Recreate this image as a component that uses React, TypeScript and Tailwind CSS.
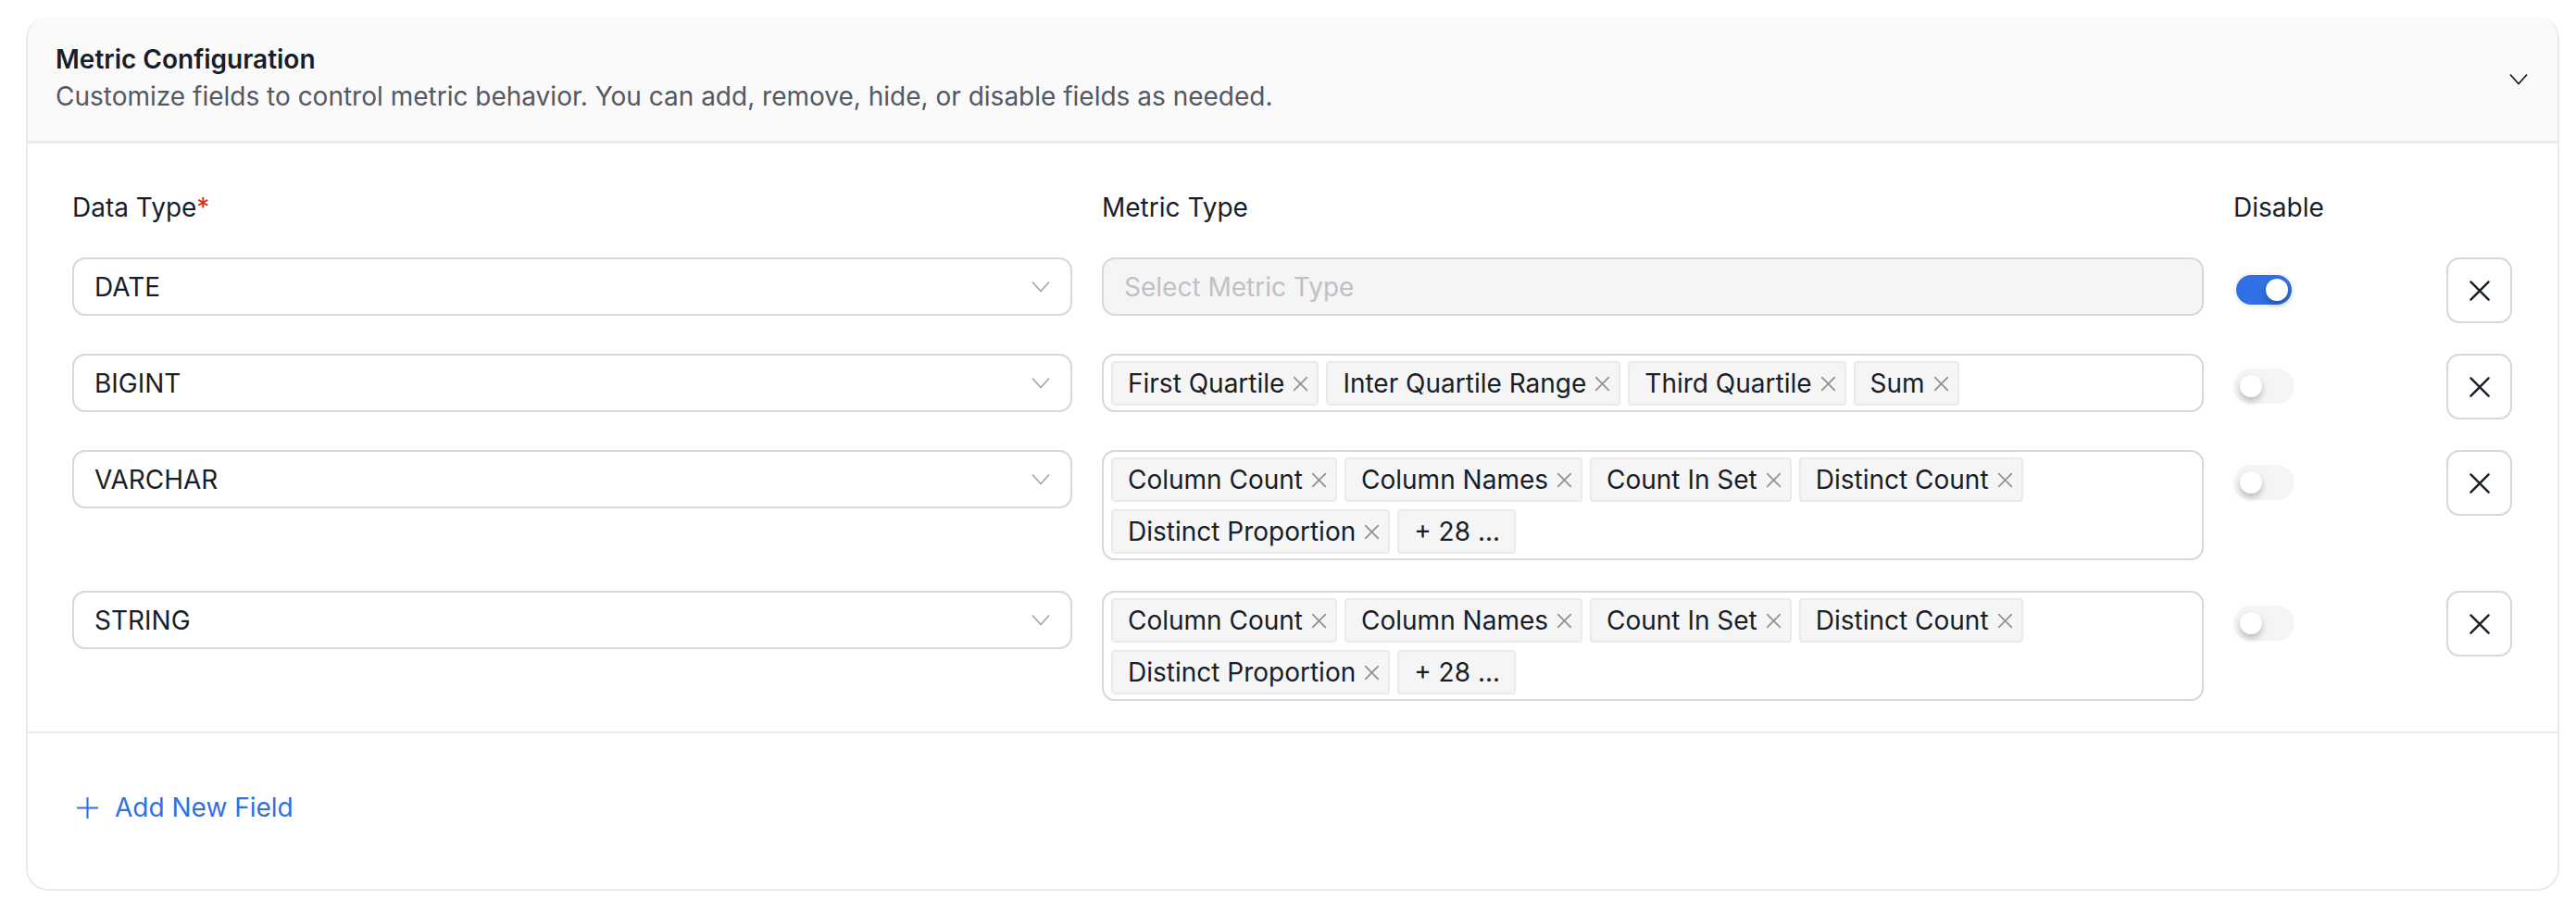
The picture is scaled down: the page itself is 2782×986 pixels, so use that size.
import React from 'react';

const font = { fontFamily: 'Inter, "Noto Sans", sans-serif' };

const Chevron = ({ className }: { className: string }) => (
  <svg viewBox="0 0 20 13" fill="none" stroke="currentColor" strokeWidth="1.8" className={className}>
    <path d="M1 1.5 10 11.5 19 1.5" />
  </svg>
);

const Cross = ({ className }: { className: string }) => (
  <svg viewBox="0 0 20 20" fill="none" stroke="currentColor" strokeWidth="2" strokeLinecap="round" className={className}>
    <path d="M2 2 18 18M18 2 2 18" />
  </svg>
);

const Tag = ({ label, close = true }: { label: string; close?: boolean }) => (
  <span className={`flex h-[48px] items-center gap-[9px] rounded-[4px] border-2 border-[#e9eaeb] bg-[#f5f5f5] pl-[16px] ${close ? 'pr-[9px]' : 'pr-[15px]'} text-[28px] text-[#181d27]`}>
    {label}
    {close && <Cross className="h-[17px] w-[17px] text-[#8f9196]" />}
  </span>
);

const SelectBox = ({ value }: { value: string }) => (
  <div className="flex h-[63px] items-center justify-between rounded-[14px] border-2 border-[#d5d7da] bg-white pl-[22px] pr-[22px] text-[28px] text-[#181d27]">
    {value}
    <Chevron className="h-[13px] w-[20px] text-[#a4a7ae]" />
  </div>
);

const Toggle = ({ on }: { on?: boolean }) => (
  <div className={`mt-[16px] flex h-[38px] w-[66px] items-center rounded-full border-[3px] border-[#f5f5f5] ${on ? 'justify-end bg-[#316fe4]' : 'bg-[#f5f5f5]'} px-[4px]`}>
    <div className="h-[24px] w-[24px] rounded-full bg-white shadow-[0_4px_7px_rgba(0,0,0,0.25)]" />
  </div>
);

const RemoveButton = () => (
  <button className="flex h-[71px] w-[71px] items-center justify-center rounded-[14px] border-2 border-[#d5d7da] bg-white text-[#181d27]">
    <Cross className="h-[24px] w-[24px]" />
  </button>
);

const longTags = ['Column Count', 'Column Names', 'Count In Set', 'Distinct Count', 'Distinct Proportion'];

const rows = [
  { type: 'DATE', on: true, tags: [] as string[], more: false },
  { type: 'BIGINT', on: false, tags: ['First Quartile', 'Inter Quartile Range', 'Third Quartile', 'Sum'], more: false },
  { type: 'VARCHAR', on: false, tags: longTags, more: true },
  { type: 'STRING', on: false, tags: longTags, more: true },
];

const App = () => {
  return (
    <div className="min-h-[986px] bg-white pl-[28px] pr-[18px] pt-[18px]" style={font}>
      <div className="overflow-hidden rounded-[24px] border-2 border-t-0 border-[#e9eaeb]">
        <div className="flex h-[137px] items-center justify-between border-b-[3px] border-[#e9eaeb] bg-[#fafafa] pl-[30px] pr-[32px]">
          <div className="pb-[1px]">
            <div className="mb-[3px] text-[28px] leading-[36px] font-semibold text-[#181d27]">Metric Configuration</div>
            <div className="text-[28px] leading-[38px] text-[#535862]">
              Customize fields to control metric behavior. You can add, remove, hide, or disable fields as needed.
            </div>
          </div>
          <Chevron className="h-[13px] w-[20px] text-[#181d27]" />
        </div>

        <div className="grid grid-cols-[1080px_1190px_198px_71px] gap-x-8 gap-y-[33px] pb-[33px] pl-[48px] pt-[50px] text-[28px] text-[#181d27]">
          <div className="mb-[2px] leading-[38px]">
            Data Type<span className="text-[#d92d20]">*</span>
          </div>
          <div className="mb-[2px] leading-[38px]">Metric Type</div>
          <div className="mb-[2px] leading-[38px]">Disable</div>
          <div />
          {rows.map((row) => (
            <React.Fragment key={row.type}>
              <SelectBox value={row.type} />
              {row.tags.length === 0 ? (
                <div className="flex h-[63px] items-center rounded-[14px] border-2 border-[#d5d7da] bg-[#f5f5f5] pl-[22px] text-[#bfc1c5]">
                  Select Metric Type
                </div>
              ) : (
                <div className="flex flex-wrap gap-[8px] self-start rounded-[14px] border-2 border-[#d5d7da] bg-white pb-[5px] pl-[8px] pr-[8px] pt-[6px]">
                  {row.tags.map((t) => (
                    <Tag key={t} label={t} />
                  ))}
                  {row.more && <Tag label="+ 28 ..." close={false} />}
                </div>
              )}
              <Toggle on={row.on} />
              <RemoveButton />
            </React.Fragment>
          ))}
        </div>

        <div className="border-t-2 border-[#e9eaeb] pb-[70px] pl-[52px] pt-[62px]">
          <button className="flex h-[36px] items-center gap-[17px] text-[28px] text-[#316fe4]">
            <svg viewBox="0 0 24 24" fill="none" stroke="currentColor" strokeWidth="2" className="h-[25px] w-[25px]">
              <path d="M12 1v22M1 12h22" />
            </svg>
            Add New Field
          </button>
        </div>
      </div>
    </div>
  );
};

export default App;
